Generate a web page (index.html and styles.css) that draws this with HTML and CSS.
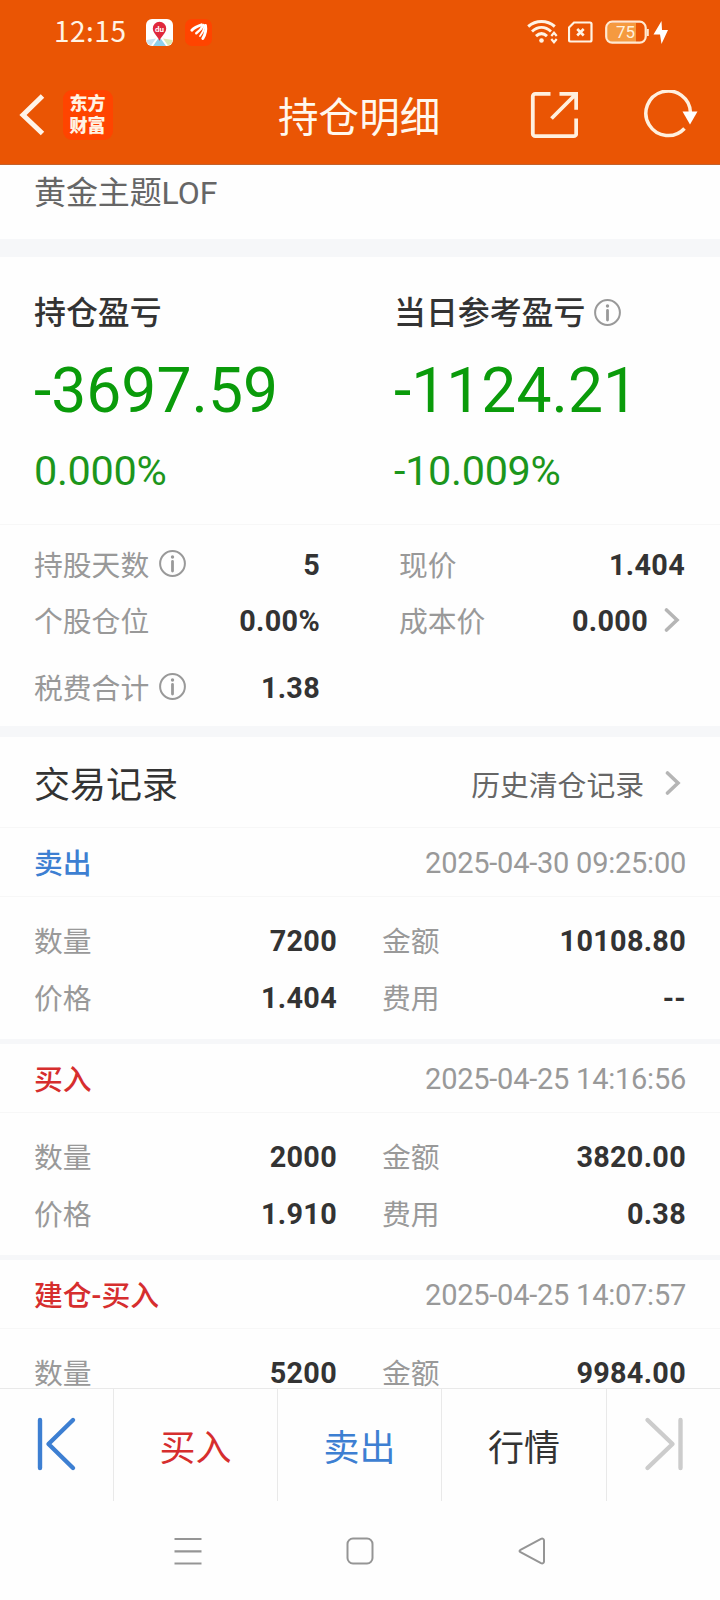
FILE: index.html
```html
<!DOCTYPE html>
<html lang="zh-CN">
<head>
<meta charset="utf-8">
<title>持仓明细</title>
<link rel="stylesheet" href="styles.css">
</head>
<body>
<header class="top">
  <div class="status">
    <span class="clock">12:15</span>
    <svg class="app-map" width="27" height="27" viewBox="0 0 27 27">
      <rect width="27" height="27" rx="6" fill="#fff"/>
      <path d="M.5 21 10 19.500 5 26.500Q.5 25 .5 21z" fill="#c9e3f2"/>
      <path d="M26.500 21 17 19.500l5 7q4.500-1.500 4.500-5.500z" fill="#dce9b4"/>
      <path d="M7 27 12 20h3l5 7z" fill="#8fd0ec"/>
      <path d="M13.500 22C12 17 6.800 14.500 6.800 9.500a6.700 6.700 0 0 1 13.400 0C20.200 14.500 15 17 13.500 22z" fill="#e0283c"/>
      <text x="13.500" y="12.500" text-anchor="middle" class="du">du</text>
    </svg>
    <svg class="app-east" width="27" height="27" viewBox="0 0 27 27">
      <rect width="27" height="27" rx="7" fill="#ff4400"/>
      <g fill="none" stroke="#fff" stroke-linecap="round">
        <path d="M6.800 11.200C9 8.800 12.500 7 16.500 5.800" stroke-width="2.800"/>
        <path d="M11.300 14.200C14 12.200 16.800 9.300 18.500 6" stroke-width="2.500"/>
        <path d="M17.800 19.500C20.300 15.500 21.300 11 20.500 6.500" stroke-width="2.900"/>
        <path d="M15 17C17.500 14 19 10.500 19.600 7" stroke-width="1.800"/>
      </g>
    </svg>
    <span class="grow"></span>
    <svg class="wifi" width="32" height="26" viewBox="0 0 32 26" fill="none" stroke="#fff3e4" stroke-width="3">
      <path d="M1.200 7.500C9 .8 20 .8 27.800 7.500"/>
      <path d="M5 12.500C11 7.200 18 7.200 24 12.500"/>
      <path d="M9 17.200c3.500-3.200 7.500-3.200 11 0"/>
      <circle cx="14.500" cy="21.500" r="2.300" fill="#fff3e4" stroke="none"/>
      <path d="m24.300 17 2.700-3.200 2.700 3.200M24.300 20l2.700 3.200 2.700-3.200" stroke-width="2.200"/>
    </svg>
    <svg class="sim" width="25" height="22" viewBox="0 0 25 22" fill="none" stroke="#fff3e4" stroke-width="2.200">
      <path d="M6 1.500h16a1.500 1.500 0 0 1 1.500 1.500v16a1.500 1.500 0 0 1-1.500 1.500H2.500A1.500 1.500 0 0 1 1 19V6.500z"/>
      <path d="m9.200 8 6.500 6.500m0-6.500-6.500 6.500" stroke-width="2.600"/>
    </svg>
    <svg class="battery" width="64" height="25" viewBox="0 0 64 25">
      <path d="M7 3h24v19H7a5 5 0 0 1-5-5V8a5 5 0 0 1 5-5z" fill="#f59a40"/>
      <rect x="1.200" y="1.700" width="39.500" height="21" rx="6" fill="none" stroke="#ffe9d2" stroke-width="2.200"/>
      <path d="M42.800 9v7" stroke="#ffe9d2" stroke-width="2"/>
      <text x="20.500" y="17.800" text-anchor="middle" class="charge">75</text>
      <path d="M56.500 1 48.500 14.500h6.500L56.500 24 63 10h-6z" fill="#fff"/>
    </svg>
  </div>
  <div class="titlebar">
    <svg class="back" width="28" height="44" viewBox="0 0 28 44"><path d="M25.500 3 6 22 25.500 40.500" fill="none" stroke="#fff3e8" stroke-width="5"/></svg>
    <div class="logo"><span>东方</span><span>财富</span></div>
    <h1 class="title">持仓明细</h1>
    <svg class="share" width="48" height="48" viewBox="0 0 48 48" fill="none" stroke="#fff0de" stroke-width="3.800">
      <path d="M20.500 2.800H5.300a2.500 2.500 0 0 0-2.500 2.500v37.400a2.500 2.500 0 0 0 2.500 2.500h38.400a2.500 2.500 0 0 0 2.500-2.500V27.500"/>
      <path d="M29.500 2.800h16.700v16M46 3 21.500 27.500"/>
    </svg>
    <svg class="refresh" width="54" height="50" viewBox="0 0 54 50">
      <path d="M40.500 38.500A22.300 22.300 0 1 1 46.500 23" fill="none" stroke="#fff0de" stroke-width="3.500"/>
      <path d="M38.500 21.500h15l-7.500 13z" fill="#fff"/>
    </svg>
  </div>
</header>

<main class="content">
  <div class="fund">黄金主题LOF</div>
  <section class="profit">
    <div class="profit-col">
      <div class="profit-label">持仓盈亏</div>
      <div class="profit-value">-3697.59</div>
      <div class="profit-rate">0.000%</div>
    </div>
    <div class="profit-col">
      <div class="profit-label">当日参考盈亏<svg class="info" width="27" height="27" viewBox="0 0 27 27"><use href="#info"/></svg></div>
      <div class="profit-value">-1124.21</div>
      <div class="profit-rate">-10.009%</div>
    </div>
  </section>
  <section class="facts">
    <div class="fact"><span>持股天数</span><svg class="info" width="27" height="27" viewBox="0 0 27 27"><use href="#info"/></svg><b>5</b></div>
    <div class="fact"><span>现价</span><b>1.404</b></div>
    <div class="fact"><span>个股仓位</span><b>0.00%</b></div>
    <div class="fact"><span>成本价</span><b>0.000</b><svg class="chev" width="16" height="26" viewBox="0 0 16 26"><use href="#chev"/></svg></div>
    <div class="fact"><span>税费合计</span><svg class="info" width="27" height="27" viewBox="0 0 27 27"><use href="#info"/></svg><b>1.38</b></div>
  </section>
  <section class="history">
    <h2 class="history-title">交易记录</h2>
    <span class="history-link">历史清仓记录</span>
    <svg class="chev" width="16" height="26" viewBox="0 0 16 26"><use href="#chev"/></svg>
  </section>
  <article class="record">
    <div class="record-head"><span class="sell">卖出</span><time>2025-04-30 09:25:00</time></div>
    <div class="record-body">
      <div class="cell"><span>数量</span><b>7200</b></div><div class="cell"><span>金额</span><b>10108.80</b></div>
      <div class="cell"><span>价格</span><b>1.404</b></div><div class="cell"><span>费用</span><b>--</b></div>
    </div>
  </article>
  <article class="record">
    <div class="record-head"><span class="buy">买入</span><time>2025-04-25 14:16:56</time></div>
    <div class="record-body">
      <div class="cell"><span>数量</span><b>2000</b></div><div class="cell"><span>金额</span><b>3820.00</b></div>
      <div class="cell"><span>价格</span><b>1.910</b></div><div class="cell"><span>费用</span><b>0.38</b></div>
    </div>
  </article>
  <article class="record">
    <div class="record-head"><span class="buy">建仓-买入</span><time>2025-04-25 14:07:57</time></div>
    <div class="record-body">
      <div class="cell"><span>数量</span><b>5200</b></div><div class="cell"><span>金额</span><b>9984.00</b></div>
    </div>
  </article>
</main>

<nav class="actions">
  <div class="action"><svg width="42" height="56" viewBox="0 0 42 56" fill="none" stroke="#3d7fd2" stroke-width="4.400" stroke-linecap="round" stroke-linejoin="round"><path d="M4 4v48M37 4 12.500 28 37 52"/></svg></div>
  <div class="action buy">买入</div>
  <div class="action sell">卖出</div>
  <div class="action">行情</div>
  <div class="action"><svg width="42" height="56" viewBox="0 0 42 56" fill="none" stroke="#ccc" stroke-width="4.400" stroke-linecap="round" stroke-linejoin="round"><path d="M37.500 4v48M4.500 4l25 24-25 24"/></svg></div>
</nav>
<footer class="system">
  <svg width="28" height="28" viewBox="0 0 28 28" fill="none" stroke="#959595" stroke-width="2.200"><path d="M.5 2h27M.5 14.300h27M.5 26.500h27"/></svg>
  <svg width="28" height="28" viewBox="0 0 28 28" fill="none" stroke="#959595" stroke-width="2"><rect x="1.500" y="1.500" width="25" height="25" rx="5.500"/></svg>
  <svg width="28" height="28" viewBox="0 0 28 28" fill="none" stroke="#959595" stroke-width="2"><path d="M2.500 12.800 23 1.900c1.500-.7 3 0 3 1.600v21c0 1.600-1.500 2.300-3 1.600L2.500 15.200c-1.300-.7-1.300-1.700 0-2.400z"/></svg>
</footer>

<svg class="defs" width="0" height="0">
  <symbol id="info" viewBox="0 0 27 27"><circle cx="13.500" cy="13.500" r="12.400" fill="none" stroke="#999" stroke-width="2"/><circle cx="13.500" cy="7" r="1.700" fill="#999"/><path d="M13.500 11.500v9.500" stroke="#999" stroke-width="2.800" stroke-linecap="round"/></symbol>
  <symbol id="chev" viewBox="0 0 16 26"><path d="M2.500 3 13 13 2.500 23" fill="none" stroke="#b5b5b5" stroke-width="3.600" stroke-linecap="round"/></symbol>
</svg>
</body>
</html>
```
FILE: styles.css
```css
* { box-sizing: border-box; }
body {
  margin: 0;
  width: 720px;
  height: 1600px;
  display: flex;
  flex-direction: column;
  overflow: hidden;
  background: #fefefe;
  color: #333;
  font-family: Roboto, "Noto Sans CJK SC", sans-serif;
  font-size: 28.8px;
}
svg { display: block; flex: none; }
h1, h2 { margin: 0; font-weight: 400; }
.defs { display: none; }
.grow { flex: 1; }

.top { flex: none; height: 165px; background: #ea5504; border-bottom: 1px solid #c4622c; }
.status { display: flex; align-items: center; height: 64px; padding: 0 51px 0 54px; }
.clock { width: 92px; margin-top: -4px; color: #fff3e4; font: 28px/40px "Noto Sans CJK SC", sans-serif; letter-spacing: .5px; }
.app-east { margin-left: 12px; }
.wifi { margin-right: 9px; }
.sim { margin-right: 12px; }
.du { font: bold 8px Roboto, sans-serif; fill: #fff; }
.charge { font: 17px Roboto, sans-serif; fill: #fff1df; }
.titlebar { display: flex; align-items: center; height: 101px; padding: 0 22px 0 17px; }
.logo {
  display: flex; flex-direction: column; align-items: center;
  width: 50px; height: 50px; padding: 1px 1px 0 0; margin-left: 18px; border-radius: 9px; background: #ff4400; color: #fff3e4;
  font: 900 18px/22px "Noto Sans CJK SC", sans-serif;
}
.title { margin-left: 165px; width: 164px; padding-top: 6px; color: #fff8ee; font-size: 40.600px; line-height: 60px; white-space: nowrap; }
.share { margin-left: 88px; }
.refresh { margin-left: auto; }

.content { flex: none; height: 1223px; overflow: hidden; }
.fund { height: 74px; padding: 4px 34px 0; color: #666; font-size: 32px; line-height: 48px; letter-spacing: -.1px; }
.profit { display: flex; height: 286px; border-top: 18px solid #f6f7f9; border-bottom: 1px solid #f7f7f7; padding: 32px 0 0 34px; }
.profit-col { width: 360px; flex: none; }
.profit-label { display: flex; align-items: center; height: 48px; line-height: 46px; font-size: 31.900px; font-weight: 500; }
.profit-label .info { margin-left: 9px; margin-top: -2px; }
.profit-value { height: 72px; margin-top: 18px; color: #0a9b0a; font-size: 62.400px; line-height: 72px; }
.profit-rate { height: 48px; margin-top: 20px; color: #1c961c; font-size: 41.400px; line-height: 48px; letter-spacing: -.3px; }

.facts { display: grid; grid-template-columns: 286px 286px; grid-template-rows: 56px 56px 78px; column-gap: 79px; height: 201px; padding: 12px 34px 0 34px; }
.fact, .cell { display: flex; align-items: center; color: #999; }
.fact span, .cell span { margin-top: -3px; }
.fact .info { margin-left: 10px; margin-top: -3px; }
.fact b, .cell b { margin-left: auto; color: #333; font-weight: 700; letter-spacing: .3px; }
.fact .chev { margin: -2px 5px 0 16px; }

.history { display: flex; align-items: center; height: 102px; padding: 0 39px 0 34px; border-top: 11px solid #f6f7f9; border-bottom: 1px solid #f7f7f7; }
.history-title { font-size: 36px; line-height: 50px; padding-top: 7px; }
.history-link { margin-left: auto; color: #666; padding-top: 3px; }
.history .chev { margin: 2px 0 0 21px; }

.record { height: 216px; border-bottom: 5px solid #f6f7f9; }
.record-head { display: flex; align-items: center; justify-content: space-between; height: 69px; padding: 0 34px; border-bottom: 1px solid #f7f7f7; }
.record-head span { margin-top: -2px; font-weight: 500; }
.record-head time { color: #999; font-size: 29px; letter-spacing: -.24px; padding-top: 1px; }
.record-body { display: grid; grid-template-columns: 303px 304px; grid-template-rows: 57px 57px; column-gap: 45px; padding: 15px 34px 0 34px; }
.sell { color: #3d7fd2; }
.buy { color: #d62e2e; }

.actions { flex: none; display: grid; grid-template-columns: 113px 164px 164px 165px 114px; height: 113px; border-top: 1px solid #e9e9e9; font-size: 36px; }
.action { display: flex; align-items: center; justify-content: center; padding-left: 1px; }
.action svg { margin-top: -3px; }
.action + .action { padding-left: 0; border-left: 1px solid #e9e9e9; }
.system { flex: 1; display: flex; justify-content: center; align-items: center; gap: 144px; }
```
